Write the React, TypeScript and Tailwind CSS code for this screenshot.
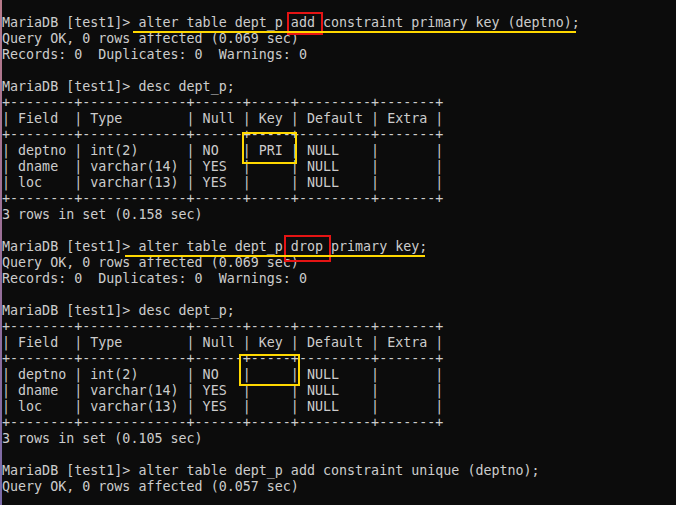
import React from "react";

const sep = "+--------+-------------+------+-----+---------+-------+";
const head = "| Field  | Type        | Null | Key | Default | Extra |";

const lines: string[] = [
  "MariaDB [test1]> alter table dept_p add constraint primary key (deptno);",
  "Query OK, 0 rows affected (0.069 sec)",
  "Records: 0  Duplicates: 0  Warnings: 0",
  "",
  "MariaDB [test1]> desc dept_p;",
  sep,
  head,
  sep,
  "| deptno | int(2)      | NO   | PRI | NULL    |       |",
  "| dname  | varchar(14) | YES  |     | NULL    |       |",
  "| loc    | varchar(13) | YES  |     | NULL    |       |",
  sep,
  "3 rows in set (0.158 sec)",
  "",
  "MariaDB [test1]> alter table dept_p drop primary key;",
  "Query OK, 0 rows affected (0.069 sec)",
  "Records: 0  Duplicates: 0  Warnings: 0",
  "",
  "MariaDB [test1]> desc dept_p;",
  sep,
  head,
  sep,
  "| deptno | int(2)      | NO   |     | NULL    |       |",
  "| dname  | varchar(14) | YES  |     | NULL    |       |",
  "| loc    | varchar(13) | YES  |     | NULL    |       |",
  sep,
  "3 rows in set (0.105 sec)",
  "",
  "MariaDB [test1]> alter table dept_p add constraint unique (deptno);",
  "Query OK, 0 rows affected (0.057 sec)",
];

export default function App() {
  return (
    <div className="relative flex h-[505px] w-[676px] overflow-hidden bg-[#0c0c0c]">
      <div className="w-[2px] shrink-0 bg-gradient-to-b from-[#b87a8a] via-[#9a6f98] to-[#7a6aa8]" />
      <div
        className="pt-[15px] text-[13.33px] leading-[16px] text-[#cccccc] whitespace-pre"
        style={{ fontFamily: '"DejaVu Sans Mono", "Liberation Mono", monospace' }}
      >
        {lines.map((l, i) => (
          <div key={i} className="h-[16px]">
            {l}
          </div>
        ))}
      </div>

      <div className="absolute left-[287px] top-[12px] h-[23px] w-[36px] border-2 border-[#e51414]" />
      <div className="absolute left-[133px] top-[31px] h-[2px] w-[443px] bg-[#ffd800]" />
      <div className="absolute left-[242px] top-[132px] h-[32px] w-[55px] border-2 border-[#ffd800]" />
      <div className="absolute left-[284px] top-[235px] h-[27px] w-[47px] border-2 border-[#e51414]" />
      <div className="absolute left-[125px] top-[255px] h-[2px] w-[300px] bg-[#ffd800]" />
      <div className="absolute left-[239px] top-[354px] h-[32px] w-[61px] border-2 border-[#ffd800]" />
    </div>
  );
}
